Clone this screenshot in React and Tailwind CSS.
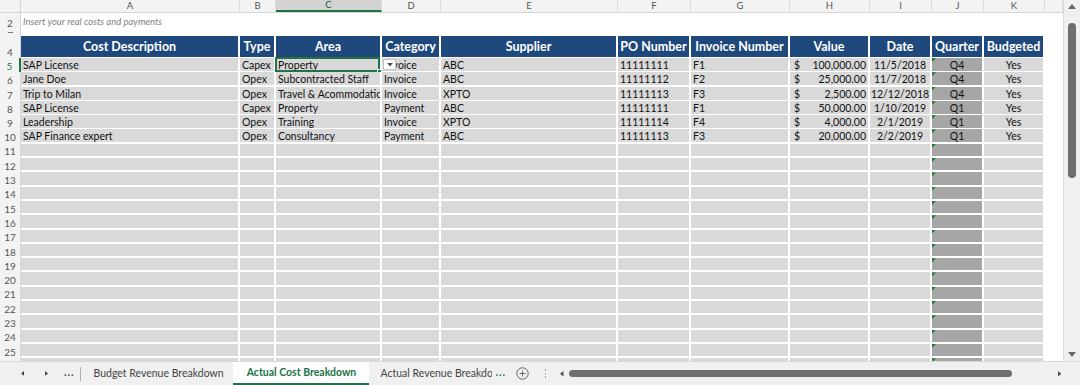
import React from "react";

const GRID =
  "grid grid-cols-[21px_219px_36px_106px_59px_177px_73px_99px_80px_62px_52px_61px_18px]";

const LETTERS = ["A", "B", "C", "D", "E", "F", "G", "H", "I", "J", "K", ""];

const HEADERS = [
  "Cost Description",
  "Type",
  "Area",
  "Category",
  "Supplier",
  "PO Number",
  "Invoice Number",
  "Value",
  "Date",
  "Quarter",
  "Budgeted",
];

const DATA = [
  ["SAP License", "Capex", "Property", "Invoice", "ABC", "11111111", "F1", "100,000.00", "11/5/2018", "Q4", "Yes"],
  ["Jane Doe", "Opex", "Subcontracted Staff", "Invoice", "ABC", "11111112", "F2", "25,000.00", "11/7/2018", "Q4", "Yes"],
  ["Trip to Milan", "Opex", "Travel & Acommodation", "Invoice", "XPTO", "11111113", "F3", "2,500.00", "12/12/2018", "Q4", "Yes"],
  ["SAP License", "Capex", "Property", "Payment", "ABC", "11111111", "F1", "50,000.00", "1/10/2019", "Q1", "Yes"],
  ["Leadership", "Opex", "Training", "Invoice", "XPTO", "11111114", "F4", "4,000.00", "2/1/2019", "Q1", "Yes"],
  ["SAP Finance expert", "Opex", "Consultancy", "Payment", "ABC", "11111113", "F3", "20,000.00", "2/2/2019", "Q1", "Yes"],
];

const ROWS = [];
for (let i = 5; i <= 26; i++) ROWS.push(i);

function RowHead({ n, active }) {
  return (
    <div
      className={
        "flex items-center justify-center pt-[1px] bg-[#f3f3f3] text-[10px] leading-none " +
        (active
          ? "text-[#217346] border-r-2 border-[#217346]"
          : "text-[#555] border-r border-[#d6d6d6]")
      }
    >
      {n}
    </div>
  );
}

function GreenTri() {
  return (
    <div className="absolute left-0 top-0 h-[4px] w-[4px] bg-[#1e7b34] [clip-path:polygon(0_0,100%_0,0_100%)]" />
  );
}

function DataRow({ n, row }) {
  const base =
    "relative flex items-center pt-[2px] overflow-hidden whitespace-nowrap border-r-2 border-b-2 border-white text-[10.5px] leading-[11px] text-[#111]";
  const cell = base + " bg-[#d9d9d9]";
  const jcell = base + " bg-[#a6a6a6]";
  const r = row || ["", "", "", "", "", "", "", "", "", "", ""];
  const active = n === 5;
  return (
    <div className={GRID + " h-[14.3px] shrink-0"}>
      <RowHead n={n} active={active} />
      <div className={cell + " pl-[2px]"}>{r[0]}</div>
      <div className={cell + " pl-[2px]"}>{r[1]}</div>
      <div className={cell + " pl-[2px] overflow-visible"}>
        <span className="overflow-hidden">{r[2]}</span>
        {active && (
          <>
            <div className="pointer-events-none absolute left-[-1px] top-[-1px] right-[0px] bottom-[-1px] border-2 border-[#217346]" />
            <div className="absolute right-[-2px] bottom-[-3px] h-[5px] w-[5px] bg-[#217346] border border-white" />
          </>
        )}
      </div>
      <div className={cell + " pl-[2px]"}>
        {r[3]}
        {active && (
          <div className="absolute left-[1px] top-[1px] h-[11px] w-[13px] bg-white border border-[#c6c6c6] flex items-center justify-center">
            <svg width="6" height="4" viewBox="0 0 6 4">
              <polygon points="0,0 6,0 3,3.5" fill="#555" />
            </svg>
          </div>
        )}
      </div>
      <div className={cell + " pl-[2px]"}>{r[4]}</div>
      <div className={cell + " pl-[2px]"}>{r[5]}</div>
      <div className={cell + " pl-[2px]"}>{r[6]}</div>
      <div className={cell + " justify-between pl-[4px] pr-[2px]"}>
        <span>{row ? "$" : ""}</span>
        <span>{r[7]}</span>
      </div>
      <div className={cell + " justify-center"}>{r[8]}</div>
      <div className={jcell + " justify-center"}>
        <GreenTri />
        {r[9]}
      </div>
      <div className={cell + " justify-center"}>{r[10]}</div>
      <div className="bg-white" />
    </div>
  );
}

function SmallTri({ dir, color = "#555", size = 5 }) {
  const pts =
    dir === "left"
      ? `${size},0 ${size},${size * 1.6} 0,${size * 0.8}`
      : dir === "right"
      ? `0,0 0,${size * 1.6} ${size},${size * 0.8}`
      : dir === "up"
      ? `0,${size} ${size * 1.6},${size} ${size * 0.8},0`
      : `0,0 ${size * 1.6},0 ${size * 0.8},${size}`;
  const w = dir === "left" || dir === "right" ? size : size * 1.6;
  const h = dir === "left" || dir === "right" ? size * 1.6 : size;
  return (
    <svg width={w} height={h} viewBox={`0 0 ${w} ${h}`}>
      <polygon points={pts} fill={color} />
    </svg>
  );
}

export default function App() {
  return (
    <div className="w-[1080px] h-[385px] overflow-hidden bg-white font-['Lato','Open_Sans',sans-serif] flex flex-col">
      <div className="flex h-[361px] shrink-0">
        {/* Sheet */}
        <div className="w-[1063px] h-[361px] overflow-hidden flex flex-col">
          {/* Column letters */}
          <div className={GRID + " h-[13px] shrink-0 bg-[#f3f3f3] border-b border-[#d6d6d6]"}>
            <div className="border-r border-[#d6d6d6]" />
            {LETTERS.map((l, i) => (
              <div
                key={i}
                className={
                  "flex items-center justify-center text-[9.5px] leading-none border-r border-[#dcdcdc] " +
                  (l === "C"
                    ? "bg-[#d3d3d3] text-[#1f5c35] border-b-2 border-b-[#217346]"
                    : "text-[#555]")
                }
              >
                {l}
              </div>
            ))}
          </div>
          {/* Row 2 */}
          <div className={GRID + " h-[18px] shrink-0"}>
            <RowHead n={2} />
            <div className="col-span-12 flex items-center pl-[2px] text-[9.5px] italic text-[#7f7f7f]">
              Insert your real costs and payments
            </div>
          </div>
          {/* Row 3 (tiny) */}
          <div className={GRID + " h-[5px] shrink-0"}>
            <div className="bg-[#f3f3f3] border-r border-[#d6d6d6] overflow-hidden flex justify-center">
              <div className="mt-[1px] h-[1px] w-[5px] bg-[#777]" />
            </div>
            <div className="col-span-12" />
          </div>
          {/* Row 4 headers */}
          <div className={GRID + " h-[22px] shrink-0"}>
            <div className="flex items-end justify-center pb-[1px] bg-[#f3f3f3] border-r border-[#d6d6d6] text-[10px] leading-none text-[#555]">
              4
            </div>
            {HEADERS.map((h) => (
              <div
                key={h}
                className="flex items-center justify-center pt-[2px] bg-[#1f497d] border-r-2 border-b border-white text-white font-bold text-[12.5px] leading-none whitespace-nowrap overflow-hidden"
              >
                {h}
              </div>
            ))}
            <div />
          </div>
          {/* Data rows */}
          {ROWS.map((n) => (
            <DataRow key={n} n={n} row={DATA[n - 5]} />
          ))}
        </div>
        {/* Vertical scrollbar */}
        <div className="w-[17px] h-[361px] bg-[#f0f0f0] border-l border-[#dadada] flex flex-col items-center">
          <div className="mt-[4px]">
            <SmallTri dir="up" size={5} color="#666" />
          </div>
          <div className="mt-[14px] w-[8px] h-[155px] rounded-full bg-[#6e6e6e]" />
          <div className="flex-1" />
          <div className="mb-[4px]">
            <SmallTri dir="down" size={5} color="#666" />
          </div>
        </div>
      </div>
      {/* Tab bar */}
      <div className="h-[24px] shrink-0 flex items-center bg-[#f0f0f0] border-t border-[#d8d8d8] text-[10.5px] text-[#444]">
        <div className="w-[24px] flex justify-end">
          <SmallTri dir="left" size={3} color="#444" />
        </div>
        <div className="w-[24px] flex justify-end">
          <SmallTri dir="right" size={3} color="#444" />
        </div>
        <div className="ml-[16px] text-[#444] font-bold tracking-[1px] leading-none pb-[2px]">...</div>
        <div className="ml-[6px] h-[14px] w-px bg-[#b0b0b0]" />
        <div className="ml-[12px] w-[140px] whitespace-nowrap">Budget Revenue Breakdown</div>
        <div className="h-full w-[136px] bg-white flex items-center justify-center border-b-2 border-[#217346] font-bold text-[#217346] whitespace-nowrap">
          Actual Cost Breakdown
        </div>
        <div className="ml-[11px] w-[112px] overflow-hidden whitespace-nowrap">Actual Revenue Breakdown</div>
        <div className="ml-[3px] text-[#217346] font-bold tracking-[1px] leading-none pb-[2px]">...</div>
        <div className="ml-[10px]">
          <svg width="13" height="13" viewBox="0 0 13 13">
            <circle cx="6.5" cy="6.5" r="5.7" fill="none" stroke="#666" strokeWidth="1" />
            <line x1="6.5" y1="3.5" x2="6.5" y2="9.5" stroke="#666" strokeWidth="1" />
            <line x1="3.5" y1="6.5" x2="9.5" y2="6.5" stroke="#666" strokeWidth="1" />
          </svg>
        </div>
        <div className="ml-[16px] flex flex-col gap-[2px]">
          <div className="w-[1.5px] h-[1.5px] bg-[#999]" />
          <div className="w-[1.5px] h-[1.5px] bg-[#999]" />
          <div className="w-[1.5px] h-[1.5px] bg-[#999]" />
        </div>
        <div className="ml-[14px]">
          <SmallTri dir="left" size={3.5} color="#555" />
        </div>
        <div className="ml-[5px] h-[7px] w-[443px] rounded-full bg-[#6e6e6e]" />
        <div className="flex-1" />
        <div className="mr-[19px]">
          <SmallTri dir="right" size={3.5} color="#555" />
        </div>
      </div>
    </div>
  );
}
